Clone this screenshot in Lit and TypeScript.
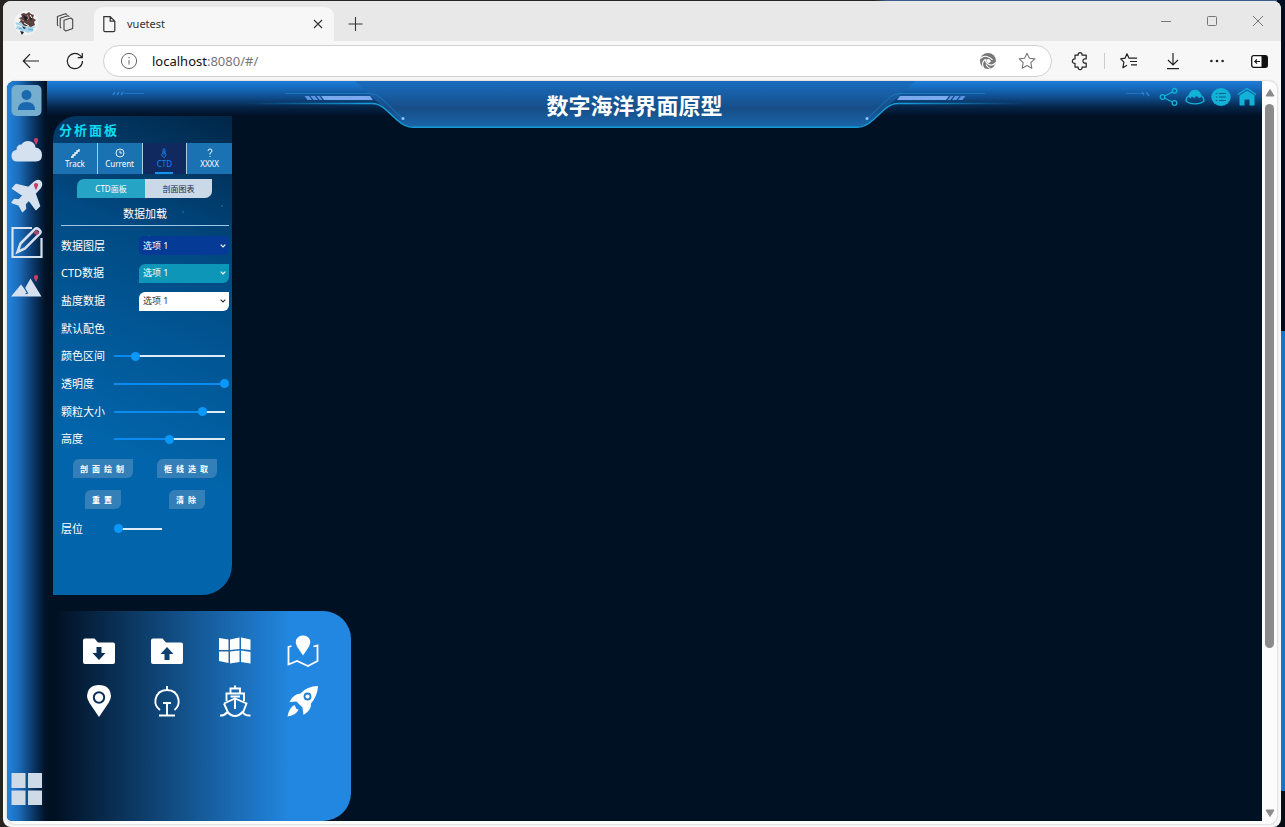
import { LitElement, html, css, svg } from "lit";
import { customElement, state } from "lit/decorators.js";
import { classMap } from "lit/directives/class-map.js";

const FONT = css`"Noto Sans", "Noto Sans CJK SC", sans-serif`;

const reset = css`
  :host, * { box-sizing: border-box; }
  button, input, select { font: inherit; margin: 0; padding: 0; border: 0; background: none; color: inherit; }
  button { cursor: pointer; display: grid; place-items: center; }
  svg { display: block; overflow: visible; }
`;

/* ---------- Browser window ---------- */

@customElement("browser-frame")
class BrowserFrame extends LitElement {
  static styles = [reset, css`
    :host { display: flex; flex-direction: column; height: 100%; font-family: ${FONT}; }
    .window { flex: 1; min-height: 0; display: flex; flex-direction: column; background: #f7f7f7; border-radius: 8px; overflow: hidden; }
    .tabs { display: flex; align-items: flex-end; height: 40px; background: #e8e8e8; padding-left: 11px; color: #444; }
    .avatar { width: 24px; height: 40px; }
    .workspaces { width: 20px; height: 40px; margin-left: 17px; }
    .tab { display: flex; align-items: center; width: 240px; height: 34px; margin-left: 19px; padding: 0 9px 0 8px; background: #f7f7f7; border-radius: 9px 9px 0 0; }
    .tab-name { flex: 1; margin-left: 10px; font-size: 11px; line-height: 16px; color: #333; }
    .plus { width: 20px; height: 34px; margin-left: 12px; }
    .controls { display: flex; margin-left: auto; align-self: stretch; }
    .controls button { width: 46px; color: #777; }
    .bar { display: flex; align-items: center; height: 40px; padding: 0 12px 0 18px; color: #222; }
    .bar button { width: 20px; height: 20px; }
    .reload { margin: 0 18px 0 24px; }
    .address { flex: 1; display: flex; align-items: center; height: 32px; margin-right: 18px; padding: 0 14px 0 16px; background: #fff; border: 1px solid #d0d0d0; border-radius: 16px; color: #777; }
    .url { flex: 1; margin-left: 14px; font-size: 13px; line-height: 18px; }
    .url b { font-weight: 400; color: #111; }
    .star { margin-left: 20px; }
    .rule { width: 1px; height: 16px; margin: 0 14px; background: #ccc; }
    .more { margin: 0 24px; }
    .panel-toggle { margin-left: 22px; }
    .card { flex: 1; min-height: 0; display: flex; margin: 0 4px 3px; padding-bottom: 3px; background: #fcfcfc; border-radius: 8px; box-shadow: 0 0 2px #aaa; }
    .page { flex: 1; min-width: 0; border-radius: 8px 0 0 5px; overflow: hidden; }
    .scroll { width: 15px; display: flex; flex-direction: column; align-items: center; padding: 8px 0 4px; color: #8b8b8b; }
    .track { flex: 1; display: flex; flex-direction: column; padding: 7px 0; }
    .thumb { flex: 0 0 78%; width: 9px; border-radius: 5px; background: #8b8b8b; }
  `];

  render() {
    return html`
      <div class="window">
        <div class="tabs">
          <svg class="avatar" viewBox="0 0 24 40">
            <circle cx="12" cy="22" r="12" fill="#f3f3f3"/>
            <path d="M7 13l3-1 2 1 3-2 2 2 3 1-1 3 3 2-2 2 1 3-4 2-4-1-3 1-2-3-3-1 2-3-2-2 3-1z" fill="#5a4240"/>
            <path d="M1 21l4 1 2-1 2 3 4 2 5 0 4-1-3 3 1 2-6 2-4-2-2 2-2-3-4-1 1-3z" fill="#a9d5ec"/>
            <path d="M9 14l4 2 1 3-3 1zM15 16l3 1-1 3zM6 30l4 1-2 3zM8 25l4 2-2 1z" fill="#1f2027"/>
            <path d="M13 14l2 3-2 2M6 18l4 2" stroke="#c9826a" fill="none"/>
            <path d="M10 22l5 3M16 14l2 3M3 24l5 2" stroke="#f5fbff" fill="none"/>
            <path d="M14 28l5 1M5 27l3 1" stroke="#5d9fca" fill="none"/>
          </svg>
          <svg class="workspaces" viewBox="0 0 20 40" fill="none" stroke="#444" stroke-width="1.1" stroke-linejoin="round">
            <path d="M9 19.200l6.700-2.200 2 1.500v9l-6.800 2.500-1.900-1.400z"/>
            <path d="M6.200 27.200l-1-.9v-9l7.600-2.600 1.600.8M3.200 24.800l-.8-.8v-8.400l8-2.800 1.800.8"/>
          </svg>
          <div class="tab">
            <svg width="15" height="18" viewBox="0 0 15 18" fill="none" stroke="#333" stroke-width="1.2"><path d="M1.800 1.600h6.400l4.600 4.600v9.200q0 1.200-1.200 1.200H3q-1.200 0-1.200-1.200zM8.200 1.600v4.600h4.600"/></svg>
            <span class="tab-name">vuetest</span>
            <button aria-label="关闭标签页"><svg width="14" height="14" viewBox="0 0 14 14" stroke="#333" stroke-width="1.1"><path d="M3 3l8 8M11 3l-8 8"/></svg></button>
          </div>
          <button class="plus" aria-label="新建标签页"><svg width="16" height="16" viewBox="0 0 16 16" stroke="#333" stroke-width="1.1"><path d="M.5 8h14M7.500 1v14"/></svg></button>
          <div class="controls">
            <button aria-label="最小化"><svg width="10" height="10" viewBox="0 0 10 10" stroke="currentColor"><path d="M0 5.500h10"/></svg></button>
            <button aria-label="最大化"><svg width="10" height="10" viewBox="0 0 10 10" fill="none" stroke="currentColor"><rect x=".5" y=".5" width="9" height="9" rx="1"/></svg></button>
            <button aria-label="关闭"><svg width="10" height="10" viewBox="0 0 10 10" stroke="currentColor"><path d="M0 0l10 10M10 0L0 10"/></svg></button>
          </div>
        </div>
        <div class="bar">
          <button aria-label="后退"><svg width="18" height="16" viewBox="0 0 18 16" fill="none" stroke="#222" stroke-width="1.2"><path d="M17 8H1.500M8 1.200L1.300 8 8 14.800"/></svg></button>
          <button class="reload" aria-label="刷新"><svg width="18" height="18" viewBox="0 0 18 18" fill="none" stroke="#222" stroke-width="1.2"><path d="M16.500 9A7.600 7.600 0 1 1 14 3.400L16 5.300M16.300 1v4.600h-4.600"/></svg></button>
          <div class="address">
            <svg width="18" height="18" viewBox="0 0 18 18" fill="none" stroke="#666"><circle cx="9" cy="9" r="7.600"/><path d="M9 8v4.600M9 5v1.400"/></svg>
            <span class="url"><b>localhost</b>:8080/#/</span>
            <svg width="18" height="18" viewBox="0 0 18 18"><circle cx="9" cy="9" r="8" fill="#777"/><g fill="none" stroke="#fff" stroke-width="1.200"><path d="M1.500 6.500q3-3 6.500-2t5.500 3.500M5 16.500Q1.500 11 6 7.500M17 10.500q-3.500 4-7.500 1.800T7 7M11.500 16.500q-3-1-4.500-4"/></g><path d="M7.500 7.500q3-1.500 4.500 2-2 2.500-4.300.5z" fill="#fff"/></svg>
            <svg class="star" width="20" height="20" viewBox="0 0 20 20" fill="none" stroke="#777" stroke-linejoin="round" stroke-width="1.1"><path d="M10 2.200l2.400 5 5.400.7-4 3.800 1 5.500-4.800-2.700-4.800 2.700 1-5.500-4-3.800 5.400-.7z"/></svg>
          </div>
          <button aria-label="扩展"><svg width="18" height="18" viewBox="0 0 18 18" fill="none" stroke="#222" stroke-width="1.200" stroke-linejoin="round"><path d="M4 3.200h3.200a2 2 0 1 1 3.800 0h4.200v3.600h-.6a2.200 2.200 0 1 0 0 4.300h.6v4H11a2 2 0 1 1-3.800 0H4v-3.800a2.200 2.200 0 1 1 0-4.300z"/></svg></button>
          <span class="rule"></span>
          <button aria-label="收藏夹"><svg width="18" height="18" viewBox="0 0 18 18" fill="none" stroke="#222" stroke-width="1.200" stroke-linejoin="round"><path d="M10.500 6.200l-1.600-.1L7 1.800 5 6.200l-4.300.7 3.200 3.200-1 5.600L7 13.300M10.500 6.200H17M10 9.500h7M11 12.800h6"/></svg></button>
          <button class="more" aria-label="下载"><svg width="16" height="18" viewBox="0 0 16 18" fill="none" stroke="#222" stroke-width="1.200"><path d="M8 1v12M3 8l5 5 5-5M2 16.600h12"/></svg></button>
          <button aria-label="更多"><svg width="16" height="4" viewBox="0 0 16 4" fill="#222"><circle cx="2.400" cy="2" r="1.300"/><circle cx="8" cy="2" r="1.300"/><circle cx="13.600" cy="2" r="1.300"/></svg></button>
          <button class="panel-toggle" aria-label="侧边栏"><svg width="17" height="13" viewBox="0 0 17 13"><rect x=".7" y=".7" width="15.600" height="11.600" rx="2" fill="#fff" stroke="#111" stroke-width="1.300"/><path d="M10.500.700h4a2 2 0 0 1 2 2v7.600a2 2 0 0 1-2 2h-4z" fill="#111"/><path d="M9 6.500H4M6 4.300L3.800 6.500 6 8.700" fill="none" stroke="#111" stroke-width="1.100"/></svg></button>
        </div>
        <div class="card">
          <div class="page"><slot></slot></div>
          <div class="scroll">
            <svg width="10" height="8" viewBox="0 0 10 8" fill="currentColor"><path d="M5 .500L9 7H1z" stroke="currentColor" stroke-linejoin="round"/></svg>
            <div class="track"><div class="thumb"></div></div>
            <svg width="10" height="8" viewBox="0 0 10 8" fill="currentColor"><path d="M5 7.500L9 1H1z" stroke="currentColor" stroke-linejoin="round"/></svg>
          </div>
        </div>
      </div>`;
  }
}

/* ---------- Header ---------- */

@customElement("ocean-header")
class OceanHeader extends LitElement {
  static styles = [reset, css`
    :host { display: grid; grid-template-columns: 1fr 780px 1fr; height: 35px; font-family: ${FONT}; background: linear-gradient(#1c7dd8 0, #166bbd 20%, #0e4885 50%, #052447 75%, #011124 100%); }
    .center { display: grid; height: 48px; }
    .center > * { grid-area: 1 / 1; }
    h1 { margin: 0; place-self: center; color: #fff; font-size: 22px; line-height: 30px; font-weight: 700; }
    .left { padding: 10px 0 0 104px; }
    .right { display: flex; justify-content: flex-end; gap: 6px; padding: 6px 5px 0 0; }
    .right button { width: 20px; height: 20px; color: #10b3d5; }
  `];

  side() {
    return svg`
      <path d="M0 22.500H127Q134 22.500 140 28L152 39Q160 46.300 168 46.300" fill="none" stroke="url(#edge)" stroke-width="1.500"/>
      <path d="M40 12.500H125Q131 12.500 136 17L157 37" fill="none" stroke="#1c83c8" stroke-width=".700"/>
      <circle cx="158" cy="37.500" r="1.500" fill="#8fc4ff"/>
      <path d="M79 19h49l-3-4H76z" fill="#7aa9ee"/>
      <path d="M62.500 19h4.500l-3-4h-4.500zM68.500 19h4.500l-3-4h-4.500zM74.500 19h3l-3-4h-3z" fill="#5c92e0"/>`;
  }

  render() {
    return html`
      <div class="left"><svg width="34" height="5" viewBox="0 0 34 5" stroke="#2c83d6" fill="none"><path d="M2 4l2-3M6 4l2-3M10 4l2-3" stroke-width="1.400"/><path d="M13 2.500h20" stroke-width=".600"/></svg></div>
      <div class="center">
        <svg viewBox="0 0 780 48" width="780" height="48">
          <defs>
            <linearGradient id="plate" x1="0" y1="0" x2="0" y2="1"><stop offset="0" stop-color="#196dbf"/><stop offset=".6" stop-color="#164e88"/><stop offset="1" stop-color="#1a66ab"/></linearGradient>
            <linearGradient id="edge" gradientUnits="userSpaceOnUse" x1="0" y1="0" x2="120" y2="0"><stop offset="0" stop-color="#159bd8" stop-opacity="0"/><stop offset="1" stop-color="#159bd8"/></linearGradient>
          </defs>
          <path d="M110 0L134 22.500Q136 24 140 28L152 39Q160 46 168 46H612Q620 46 628 39L640 28Q644 24 646 22.500L670 0Z" fill="url(#plate)"/>
          ${this.side()}
          <g transform="translate(780 0) scale(-1 1)">${this.side()}</g>
          <path d="M168 46.300H612" stroke="#159bd8" stroke-width="1.500"/>
        </svg>
        <h1>数字海洋界面原型</h1>
      </div>
      <nav class="right" aria-label="快捷操作">
        <svg width="24" height="12" viewBox="0 0 24 12" fill="none" stroke="#2c83d6"><path d="M-3 6.500h16" stroke-width=".600"/><path d="M13 5l2 3M17 5l3 4" stroke-width="1.500"/></svg>
        <button aria-label="分享"><svg width="20" height="20" viewBox="0 0 20 20" fill="none" stroke="currentColor" stroke-width="1.300"><circle cx="3.500" cy="10" r="2.300"/><circle cx="15.500" cy="3.800" r="2.300"/><circle cx="15.500" cy="16" r="2.300"/><path d="M5.600 9L13.400 5M5.600 11L13.400 15"/></svg></button>
        <button aria-label="地形"><svg width="20" height="20" viewBox="0 0 20 20"><path d="M1 14Q1 10.500 4 8.500 6 3.500 10 3.500T16 8.500Q19 10.500 19 14 16 16.800 10 16.800T1 14Z" fill="none" stroke="currentColor" stroke-width="1.300"/><path d="M3.500 9.500Q5.500 3.500 10 3.500t6.500 6l-2 1.500-3-2-2.500 2-2-1.500-2 2z" fill="currentColor"/></svg></button>
        <button aria-label="列表"><svg width="20" height="20" viewBox="0 0 20 20"><ellipse cx="10" cy="10" rx="9.700" ry="9" fill="currentColor"/><path d="M8 6.500h7M8 10h7M8 13.500h7M4.800 6.500h1.600M4.800 10h1.600M4.800 13.500h1.600" stroke="#0a5d94" stroke-width="1.200"/></svg></button>
        <button aria-label="主页"><svg width="20" height="20" viewBox="0 0 20 20"><path d="M.8 7.500L10 1.500l9.200 6" fill="none" stroke="currentColor" stroke-width="1.400"/><path d="M2.500 8.300L10 3.800 17.500 8.300v10.200H12.500v-6h-5v6h-5z" fill="currentColor"/></svg></button>
      </nav>`;
  }
}

/* ---------- Left rail ---------- */

const pin = svg`<path d="M25.500-1q2.500 0 2 2.500L26 5.500h-1L23.500 1.500Q23.200-1 25.500-1z" fill="#cc3b66"/>`;

@customElement("side-rail")
class SideRail extends LitElement {
  static styles = [reset, css`
    :host { display: flex; flex-direction: column; align-items: center; gap: 15px; padding: 4px 0 16px; background: linear-gradient(90deg, #2284de 0, #1b6cba 30%, #0b3869 65%, #011124 97%); }
    button { width: 32px; height: 32px; flex: none; }
    .menu { margin-top: auto; }
  `];
  render() {
    return html`
      <button aria-label="用户"><svg width="32" height="32" viewBox="0 0 32 32"><rect x=".5" y="0" width="30" height="31" rx="5" fill="#76aecf"/><circle cx="15.500" cy="10" r="5" fill="#1a68ad"/><path d="M7 25Q7 17 15.500 17T24 25z" fill="#1a68ad"/></svg></button>
      <button aria-label="云层"><svg width="32" height="32" viewBox="0 0 32 32"><path d="M6.500 29.500Q.500 29.500.500 24 .500 18.500 5.500 18 5.500 12.500 10.500 12.500 12.500 9 17 9 23.500 9 24.500 15.500 31 16.500 31 23 31 29.500 25 29.500z" fill="#d5e1ef"/><g transform="translate(-.500 7)">${pin}</g></svg></button>
      <button aria-label="航班"><svg width="32" height="32" viewBox="0 0 32 32"><path d="M29.500 2.500Q31.500 5 29.500 8.500L24 14.500 28.500 27l-3.500 3.500-7-9.500-4 4 .500 4.500-3 3-3.500-6.500L1 23.500l2.500-3 4.500.5 4-4.500L1.500 9.500 5 5.500l12.500 3L23.500 3Q27 .500 29.500 2.500z" fill="#d5e1ef" stroke="#d5e1ef" stroke-width="1.500" stroke-linejoin="round"/><g transform="translate(-.500 5)">${pin}</g></svg></button>
      <button aria-label="编辑"><svg width="32" height="32" viewBox="0 0 32 32" fill="none"><path d="M21 2H1.500v29h29V12" stroke="#d5e1ef" stroke-width="2.200"/><path d="M6.500 26l3-8.500L24 3q1.500-1.500 4 .500t1 4L14 22.500z" stroke="#d5e1ef" stroke-width="2.500"/><path d="M25 3.500l3.500 3.500-3 2.500-3.500-3z" fill="#a7496e"/></svg></button>
      <button aria-label="地形"><svg width="32" height="32" viewBox="0 0 32 32"><path d="M0 23.500L10 11.500l3.500 4.500L19.500 5.500 30.500 23.500z" fill="#d5e1ef"/><path d="M13.500 15l3 5-2 1" fill="none" stroke="#185a9b" stroke-width="1.200"/><g transform="translate(-.500 3)">${pin}</g></svg></button>
      <button class="menu" aria-label="工具菜单"><svg width="32" height="32" viewBox="0 0 32 32" fill="#cedbe7"><path d="M.500 0h14v15h-14zM17 0h14v15H17zM.500 17.500h14v14.500h-14zM17 17.500h14v14.500H17z"/></svg></button>`;
  }
}

/* ---------- Analysis panel ---------- */

@customElement("analysis-panel")
class AnalysisPanel extends LitElement {
  static styles = [reset, css`
    :host { display: flex; flex-direction: column; width: 179px; height: 479px; font-family: ${FONT}; color: #fff; border-radius: 24px 0 30px 0; overflow: hidden;
      background: radial-gradient(circle at 130px 96px, #4b9bd0 0, transparent 1px), radial-gradient(circle at 96px 120px, #3b8bc0 0, transparent 1px), radial-gradient(circle at 169px 90px, #4b9bd0 0, transparent 1px), linear-gradient(203deg, #012748 0, #014a83 28%, #015694 45%, #0265ab 70%); }
    h2 { margin: 0; height: 27px; padding: 5px 0 0 6px; font-size: 13px; line-height: 18px; font-weight: 700; letter-spacing: 2px; color: #0cdcf2; }
    .tabs { display: grid; grid-template-columns: repeat(4, 1fr); height: 31px; }
    .tab { align-content: center; position: relative; background: #1b72b3; font-size: 8px; line-height: 12px; border-right: 1px solid #a9cce6; }
    .tab:last-child { border-right: 0; }
    .tab.on { background: #10295f; color: #1a82f2; }
    .tab.on::after { content: ""; position: absolute; bottom: 0; left: calc(50% - 9px); width: 18px; height: 2px; background: #1492f0; }
    .segments { display: grid; grid-template-columns: 68px 67px; justify-content: center; height: 19px; margin: 5px 0 0 4px; font-size: 8px; line-height: 12px; }
    .segments button { background: #cad9e7; color: #1c2d40; border-radius: 0 0 7px 0; }
    .segments button.on { background: #25a4c5; color: #fff; border-radius: 7px 0 0 0; }
    h3 { margin: 7px 3px 0 8px; height: 21px; font-size: 11px; line-height: 18px; font-weight: 400; text-align: center; border-bottom: 1px solid #9cc8e8; }
    .rows { display: grid; grid-template-rows: repeat(8, 1fr); height: 221px; margin-top: 6px; }
    .row { display: grid; grid-template-columns: 48px 1fr; align-items: center; padding: 0 3px 0 8px; font-size: 11px; line-height: 16px; }
    .row label, .row span { white-space: nowrap; }
    .pick { justify-self: end; display: grid; width: 90px; height: 19px; border-radius: 6px 0 6px 0; }
    .pick > * { grid-area: 1 / 1; }
    .pick svg { place-self: center end; margin-right: 3px; pointer-events: none; }
    .blue { background: #053a96; border-radius: 5px; }
    .teal { background: #0d96b8; }
    .white { background: #fff; color: #333; }
    select { appearance: none; width: 100%; padding-left: 4px; font-size: 9px; line-height: 12px; }
    option { color: #222; }
    input { appearance: none; width: 120px; height: 9px; --fill: 0%;
      background: linear-gradient(90deg, #0a8bf0 var(--fill), #dcebf7 var(--fill)) center / calc(100% - 9px) 2px no-repeat; }
    input.short { width: 57px; }
    input::-webkit-slider-thumb { appearance: none; width: 9px; height: 9px; border-radius: 50%; background: #0a98fc; }
    .actions { display: grid; grid-template-columns: 1fr 1fr; justify-items: center; row-gap: 12px; padding: 6px 3px 5px 8px; }
    .actions button { height: 19px; padding: 0 5px 0 7px; background: #347fb8; border-radius: 6px 0 6px 0; font-size: 8px; line-height: 12px; font-weight: 700; letter-spacing: 4px; }
    .depth { height: 29px; }
  `];

  @state() tab = "CTD";
  @state() values: number[] = [20, 100, 80, 50, 10];

  tabIcons: Record<string, unknown> = {
    Track: svg`<path d="M1 9h2V7h2V5h2V3h2V1" stroke-width="1.300"/>`,
    Current: svg`<circle cx="5" cy="5" r="4"/><path d="M5 2.500V5h2"/>`,
    CTD: svg`<path d="M4 5V1.500q1-1.500 2 0V5q1.500 1.500.5 3.500T3.500 8.500 4 5M5 3v4"/>`,
    XXXX: svg`<path d="M3 3q0-2 2-2t2 2Q7 4.300 5 5v1.600M5 8v1"/>`,
  };

  slide(i: number, e: Event) {
    const next = [...this.values];
    next[i] = Number((e.target as HTMLInputElement).value);
    this.values = next;
  }

  slider(i: number, name: string, short = false) {
    return html`<label for="s${i}">${name}</label>
      <input id="s${i}" class=${short ? "short" : ""} type="range" min="0" max="100" .value=${String(this.values[i])} style="--fill:${this.values[i]}%" @input=${(e: Event) => this.slide(i, e)}>`;
  }

  picker(name: string, tone: string) {
    return html`<div class="row"><label for=${tone}>${name}</label>
      <div class="pick ${tone}"><select id=${tone}><option>选项 1</option><option>选项 2</option></select>
      <svg width="6" height="4" viewBox="0 0 6 4" fill="none" stroke="currentColor" stroke-width="1.200"><path d="M.7.700L3 3 5.300.700"/></svg></div></div>`;
  }

  render() {
    return html`
      <h2>分析面板</h2>
      <div class="tabs">
        ${Object.keys(this.tabIcons).map((t) => html`<button class=${classMap({ tab: true, on: t === this.tab })} @click=${() => (this.tab = t)}>
          <svg width="10" height="10" viewBox="0 0 10 10" fill="none" stroke="currentColor" stroke-width=".900">${this.tabIcons[t]}</svg>${t}</button>`)}
      </div>
      <div class="segments"><button class="on">CTD面板</button><button>剖面图表</button></div>
      <h3>数据加载</h3>
      <div class="rows">
        ${this.picker("数据图层", "blue")}
        ${this.picker("CTD数据", "teal")}
        ${this.picker("盐度数据", "white")}
        <div class="row"><span>默认配色</span></div>
        ${["颜色区间", "透明度", "颗粒大小", "高度"].map((n, i) => html`<div class="row">${this.slider(i, n)}</div>`)}
      </div>
      <div class="actions">${["剖面绘制", "框线选取", "重置", "清除"].map((n) => html`<button>${n}</button>`)}</div>
      <div class="row depth">${this.slider(4, "层位", true)}</div>`;
  }
}

/* ---------- Tool drawer ---------- */

@customElement("tool-drawer")
class ToolDrawer extends LitElement {
  static styles = [reset, css`
    :host { display: grid; grid-template-columns: repeat(4, 32px); grid-auto-rows: 32px; gap: 18px 36px; width: 304px; height: 210px; padding: 24px 36px; color: #fff; border-radius: 0 28px 28px 0;
      background: linear-gradient(90deg, #011124 3%, #2287e0 80%); }
  `];
  tools = [
    ["下载", svg`<path d="M2 3.500h9.500L15 7.500h15q2 0 2 2V27q0 2-2 2H2q-2 0-2-2V5.500q0-2 2-2z" fill="#fff"/><path d="M13.500 12h5v6h4l-6.500 7-6.500-7h4z" fill="#0a2e55"/>`],
    ["上传", svg`<path d="M2 3.500h9.500L15 7.500h15q2 0 2 2V27q0 2-2 2H2q-2 0-2-2V5.500q0-2 2-2z" fill="#fff"/><path d="M13.500 25h5v-6h4L16 12l-6.500 7h4z" fill="#10406f"/>`],
    ["图幅", svg`<path d="M0 3l9.500 1.500v10.500H0zM11 4.500L20.500 2.500v11.500L11 15zM22 2.500l9.500 2v10.500L22 14zM0 16.500h9.500V28L0 26zM11 16.500l9.500-1V27L11 28.500zM22 15.500l9.500 1.500v11.500L22 27z" fill="#fff"/>`],
    ["地图", svg`<path d="M4.500 11L1.500 12v17.500l8.500-3.500 11 5 9.500-5V10.500l-4 1" fill="none" stroke="#fff" stroke-width="1.800"/><path d="M16 20.500L10 11.500Q8 8 9 5q2-4.500 7-4.500t7 4.500q1 3-1 6.500z" fill="#fff"/>`],
    ["定位", svg`<path d="M16 32L6.500 18Q4 14 4 11 5 0 16 0t12 11q0 3-2.500 7z" fill="#fff"/><circle cx="16" cy="12.500" r="5.200" fill="#fff" stroke="#0b315a" stroke-width="2"/>`],
    ["锚点", svg`<g fill="none" stroke="#fff" stroke-width="1.900"><path d="M9 25Q3.500 21 4.500 14.500 6.500 5 16 5t11.500 9.500Q28.500 21 23.500 25M16 1v4M12 18h8M16 18v12M8 30.500h16"/></g>`],
    ["船舶", svg`<g fill="none" stroke="#fff" stroke-width="1.900"><path d="M16 .500V3M11.500 8V3.500h9.500V8M7.500 16V8.500h17.500V16M11.500 11.500h9.500M5 18.500L16 13.500 27.500 18.500 24 27.500M5 18.500L9 27.500M16 14v10M1 30.500q4 .5 7.500-3.500Q12 31 16 31t7.500-4Q26 31 31.500 30.500"/></g>`],
    ["发射", svg`<path d="M31 1Q20 1 13.500 8.500 6 9 2.500 17l7-.5 6 6 1 7.500Q24.500 25 24 18.500 30.500 11 31 1zM7.500 20Q2 22.500.5 31.500 9.500 30 11.500 24.500l-2-.5z" fill="#fff"/><circle cx="20.500" cy="11.500" r="3" fill="#fff" stroke="#217fd3" stroke-width="1.800"/>`],
  ] as const;
  render() {
    return html`${this.tools.map(([name, art]) => html`<button aria-label=${name}><svg width="32" height="32" viewBox="0 0 32 32">${art}</svg></button>`)}`;
  }
}

@customElement("app-root")
class AppRoot extends LitElement {
  static styles = css`
    :host { display: block; box-sizing: border-box; height: 100vh; padding: 1px 4px 0 3px;
      background: linear-gradient(#020c20 40%, #1a73c4 40%, #1a73c4 95.700%, #080c14 95.700%) right / 8px 100% no-repeat, linear-gradient(90deg, #262321 68%, #3b5c8c 69%); }
    .layout { display: grid; grid-template-columns: 40px 1fr; grid-template-rows: 35px 1fr; height: 100%; background: #011124; }
    ocean-header { grid-area: 1 / 1 / 2 / 3; }
    side-rail { grid-area: 1 / 1 / 3 / 2; z-index: 1; border-radius: 8px 0 0 0; }
    main { grid-area: 2 / 2; display: flex; flex-direction: column; justify-content: space-between; }
    analysis-panel { margin-left: 6px; }
  `;
  render() {
    return html`<browser-frame><div class="layout">
      <ocean-header></ocean-header>
      <side-rail></side-rail>
      <main><analysis-panel></analysis-panel><tool-drawer></tool-drawer></main>
    </div></browser-frame>`;
  }
}
